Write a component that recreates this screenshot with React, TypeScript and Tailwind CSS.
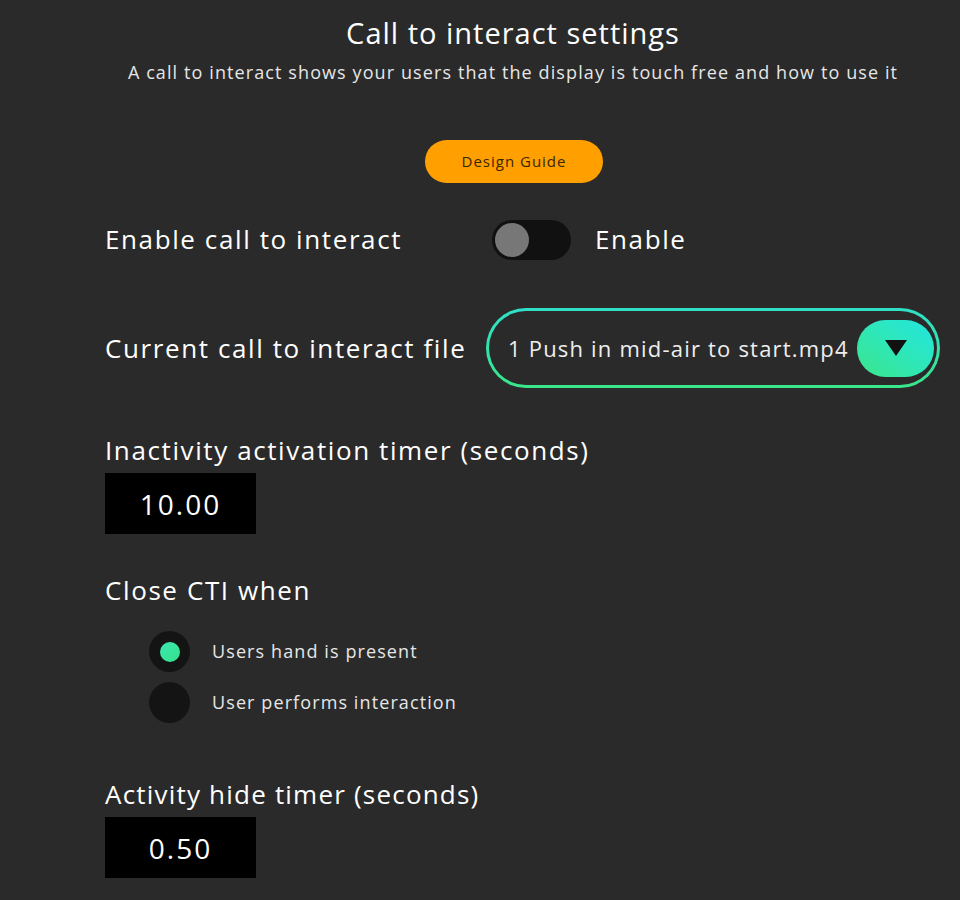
import { useState } from 'react'

const font = { fontFamily: '"Open Sans", "Noto Sans", sans-serif' }

const TimerInput = ({ value }: { value: string }) => (
  <div className="w-[151px] h-[61px] bg-black flex items-center justify-center text-[28px] tracking-[2px] text-white">
    {value}
  </div>
)

const Radio = ({ checked, label, onClick }: { checked: boolean; label: string; onClick: () => void }) => (
  <div className="flex items-center cursor-pointer" onClick={onClick}>
    <div className="w-[41px] h-[41px] rounded-full bg-[#141414] flex items-center justify-center">
      {checked && <div className="w-[20px] h-[20px] rounded-full bg-gradient-to-br from-[#3de8b0] to-[#34e08a]" />}
    </div>
    <span className="ml-[22px] text-[18px] tracking-[1.1px] text-[#e6e6e6]">{label}</span>
  </div>
)

export default function App() {
  const [enabled, setEnabled] = useState(false)
  const [closeWhen, setCloseWhen] = useState(0)

  return (
    <div className="w-[960px] h-[900px] bg-[#2a2a2a] text-white overflow-hidden" style={font}>
      <div className="flex flex-col items-center pt-[14px]">
        <h1 className="text-[29px] leading-[38px] tracking-[1px] ml-[66px]">Call to interact settings</h1>
        <p className="text-[18px] leading-[26px] tracking-[1.1px] mt-[7px] ml-[66px] text-[#e6e6e6]">
          A call to interact shows your users that the display is touch free and how to use it
        </p>
        <button className="mt-[55px] w-[178px] h-[43px] rounded-full bg-[#ff9f00] text-[#3a2600] text-[15px] tracking-[1px] ml-[68px]">
          Design Guide
        </button>
      </div>

      <div className="pl-[105px] tracking-[1.6px]">
        <div className="flex items-center mt-[36px] h-[41px]">
          <span className="w-[387px] text-[26px]">Enable call to interact</span>
          <button
            onClick={() => setEnabled(!enabled)}
            className="w-[79px] h-[40px] rounded-full bg-[#111111] flex items-center px-[3px]"
          >
            <div className={`w-[34px] h-[34px] rounded-full ${enabled ? 'bg-[#3de8a0] ml-auto' : 'bg-[#777777]'}`} />
          </button>
          <span className="ml-[24px] text-[26px]">Enable</span>
        </div>

        <div className="flex items-center mt-[48px]">
          <span className="w-[381px] text-[26px]">Current call to interact file</span>
          <div className="w-[454px] h-[80px] rounded-full p-[3px] bg-gradient-to-b from-[#2fe0c8] to-[#3ae68a]">
            <div className="w-full h-full rounded-full bg-[#2a2a2a] flex items-center pl-[19px] pr-[3px]">
              <span className="flex-1 text-[22px] tracking-[1.2px] text-[#eeeeee] whitespace-nowrap">1 Push in mid-air to start.mp4</span>
              <div className="w-[77px] h-[57px] rounded-full bg-gradient-to-tr from-[#3ce68a] to-[#22e6e0] flex items-center justify-center">
                <svg width="22" height="16" viewBox="0 0 22 16">
                  <path d="M0 0 L22 0 L11 16 Z" fill="#111" />
                </svg>
              </div>
            </div>
          </div>
        </div>

        <div className="mt-[44px] text-[26px] leading-[36px]">Inactivity activation timer (seconds)</div>
        <div className="mt-[5px]">
          <TimerInput value="10.00" />
        </div>

        <div className="mt-[38px] text-[26px] leading-[36px]">Close CTI when</div>
        <div className="ml-[44px] mt-[23px] flex flex-col gap-[10px]">
          <Radio checked={closeWhen === 0} label="Users hand is present" onClick={() => setCloseWhen(0)} />
          <Radio checked={closeWhen === 1} label="User performs interaction" onClick={() => setCloseWhen(1)} />
        </div>

        <div className="mt-[53px] text-[26px] leading-[36px] tracking-[1.2px]">Activity hide timer (seconds)</div>
        <div className="mt-[5px]">
          <TimerInput value="0.50" />
        </div>
      </div>
    </div>
  )
}
